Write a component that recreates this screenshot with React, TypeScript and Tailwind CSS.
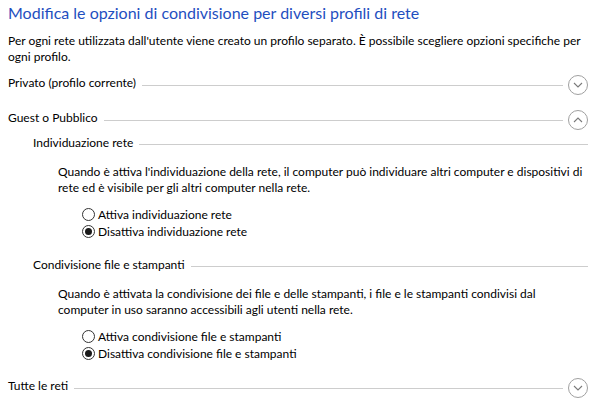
import React from "react";

function Chevron({ up }: { up?: boolean }) {
  return (
    <div className="w-[20px] h-[20px] rounded-full border border-[#a0a0a0] flex items-center justify-center shrink-0">
      <svg width="10" height="6" viewBox="0 0 10 6" fill="none">
        {up ? (
          <path d="M1 5 L5 1 L9 5" stroke="#7a7a7a" strokeWidth="1.1" />
        ) : (
          <path d="M1 1 L5 5 L9 1" stroke="#7a7a7a" strokeWidth="1.1" />
        )}
      </svg>
    </div>
  );
}

function MainHeader({ label, up, className }: { label: string; up?: boolean; className?: string }) {
  return (
    <div className={`flex items-center h-[20px] ${className ?? ""}`}>
      <span className="text-[12px] leading-[16px] text-black whitespace-nowrap -mt-[4px]">{label}</span>
      <div className="flex-1 h-px bg-[#cdcdcd] ml-[6px] mr-[5px]" />
      <Chevron up={up} />
    </div>
  );
}

function SubHeader({ label, className }: { label: string; className?: string }) {
  return (
    <div className={`flex items-center h-[16px] pl-[25px] ${className ?? ""}`}>
      <span className="text-[12px] leading-[16px] text-black whitespace-nowrap">{label}</span>
      <div className="flex-1 h-px bg-[#cdcdcd] ml-[6px] mt-[2px]" />
    </div>
  );
}

function Radio({ label, checked }: { label: string; checked?: boolean }) {
  return (
    <div className="flex items-center h-[17px]">
      <div className="w-[13px] h-[13px] rounded-full border border-[#333333] flex items-center justify-center shrink-0 bg-white">
        {checked && <div className="w-[7px] h-[7px] rounded-full bg-[#1a1a1a]" />}
      </div>
      <span className="ml-[3px] text-[12px] leading-[16px] text-black whitespace-nowrap">{label}</span>
    </div>
  );
}

export default function App() {
  return (
    <div className="w-[600px] h-[414px] bg-white pl-[8px] pr-[12px] overflow-hidden font-['Lato',sans-serif]">
      <div className="pt-[3px] text-[16px] leading-[20px] text-[#1f4fbf] whitespace-nowrap">
        Modifica le opzioni di condivisione per diversi profili di rete
      </div>
      <p className="mt-[10px] text-[12px] leading-[16px] text-black">
        Per ogni rete utilizzata dall'utente viene creato un profilo separato. È possibile scegliere opzioni specifiche per ogni profilo.
      </p>
      <MainHeader label="Privato (profilo corrente)" className="mt-[10px]" />
      <MainHeader label="Guest o Pubblico" up className="mt-[15px]" />
      <SubHeader label="Individuazione rete" className="mt-[5px]" />
      <p className="mt-[13px] pl-[50px] pr-[4px] text-[12px] leading-[16px] text-black">
        Quando è attiva l'individuazione della rete, il computer può individuare altri computer e dispositivi di rete ed è visibile per gli altri computer nella rete.
      </p>
      <div className="mt-[10px] pl-[74px] flex flex-col">
        <Radio label="Attiva individuazione rete" />
        <Radio label="Disattiva individuazione rete" checked />
      </div>
      <SubHeader label="Condivisione file e stampanti" className="mt-[17px]" />
      <p className="mt-[13px] pl-[50px] pr-[4px] text-[12px] leading-[16px] text-black">
        Quando è attivata la condivisione dei file e delle stampanti, i file e le stampanti condivisi dal computer in uso saranno accessibili agli utenti nella rete.
      </p>
      <div className="mt-[10px] pl-[74px] flex flex-col">
        <Radio label="Attiva condivisione file e stampanti" />
        <Radio label="Disattiva condivisione file e stampanti" checked />
      </div>
      <MainHeader label="Tutte le reti" className="mt-[16px]" />
    </div>
  );
}
